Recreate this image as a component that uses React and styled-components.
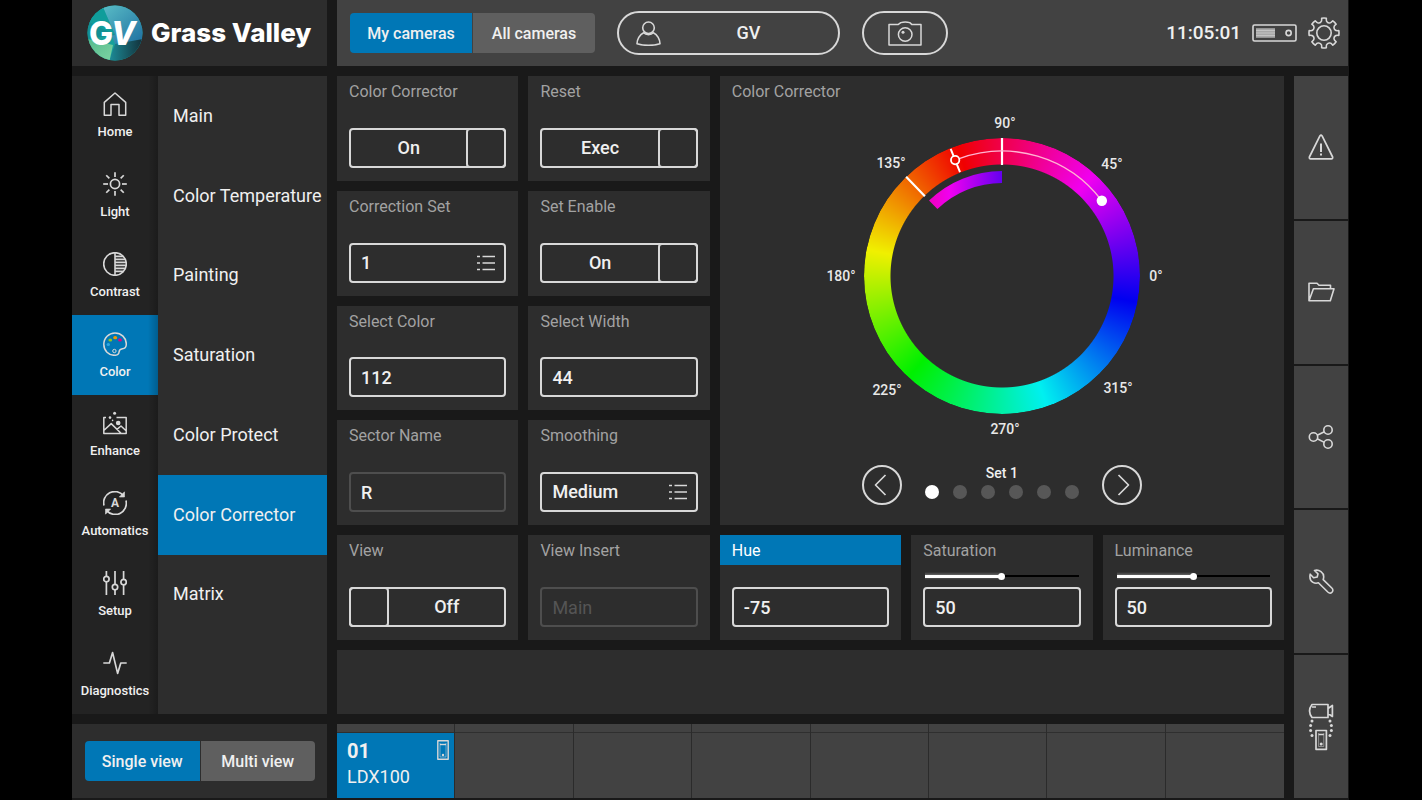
import React, { useState } from "react";
import styled, { createGlobalStyle, css } from "styled-components";

const GlobalStyle = createGlobalStyle`
  *, *::before, *::after { box-sizing: border-box; }
  body { margin: 0; background: #000; color: #f0f0f0; font: 400 18px/24px Roboto, "Liberation Sans", sans-serif; }
  button, input, select { font: inherit; color: inherit; margin: 0; }
  button { background: none; border: 0; padding: 0; cursor: pointer; }
  h2 { margin: 0; font: inherit; }
  svg { display: block; flex: none; }
`;

const blue = "#0077b6";
const panel = "#2d2d2d";
const raised = "#424242";
const line = "#d8d8d8";

/* ---------- page frame ---------- */

const Frame = styled.div`
  min-height: 100vh;
  margin: 0 73px 0 72px;
  padding: 0 1px 2px 0;
  background: #191919;
  display: grid;
  grid-template-columns: 255px minmax(0, 1fr) 54px;
  grid-template-rows: 66px minmax(0, 1fr) 74px;
  gap: 10px;
  grid-template-areas: "brand top top" "menu work rail" "view cams rail";
`;

const Brand = styled.div`
  grid-area: brand;
  background: ${panel};
  display: flex;
  align-items: center;
  gap: 8px;
  padding-left: 15px;
`;

const BrandName = styled.span`
  font: 800 26px/32px Inter, "Open Sans", sans-serif;
  color: #fff;
  white-space: nowrap;
`;

const TopBar = styled.header`
  grid-area: top;
  background: ${raised};
  display: flex;
  align-items: center;
  gap: 22px;
  padding: 0 8px 0 13px;
`;

const Status = styled.div`
  margin-left: auto;
  display: flex;
  align-items: center;
  gap: 11px;
`;

const Clock = styled.time`
  font-size: 19px;
  font-weight: 500;
`;

const Pill = styled.button`
  height: 44px;
  width: ${(p) => (p.$wide ? 223 : 86)}px;
  border: 2px solid ${line};
  border-radius: 22px;
  display: grid;
  grid-template-columns: ${(p) => (p.$wide ? "24px 1fr" : "auto")};
  place-items: center;
  padding: ${(p) => (p.$wide ? "0 1px 0 17px" : "0 17px")};
  font-weight: 500;
`;

/* ---------- segmented switch ---------- */

const Segments = styled.div`
  display: grid;
  grid-template-columns: 1fr 1fr;
  gap: 1px;
  width: ${(p) => p.$width};
  height: 40px;
  border-radius: 4px;
  overflow: hidden;
`;

const Segment = styled.button`
  background: ${(p) => (p.$on ? blue : "#5f5f5f")};
  padding-top: 1px;
  font-size: 16px;
  font-weight: 500;
`;

function Segmented({ options, label, width }) {
  const [active, setActive] = useState(0);
  return (
    <Segments role="group" aria-label={label} $width={width}>
      {options.map((o, i) => (
        <Segment key={o} $on={i === active} aria-pressed={i === active} onClick={() => setActive(i)}>
          {o}
        </Segment>
      ))}
    </Segments>
  );
}

/* ---------- left menus ---------- */

const Menus = styled.div`
  grid-area: menu;
  display: grid;
  grid-template-columns: 86px 1fr;
`;

const MainNav = styled.nav`
  display: grid;
  grid-template-rows: repeat(8, 1fr);
  background: #232323;
`;

const NavItem = styled.button`
  display: flex;
  flex-direction: column;
  align-items: center;
  justify-content: center;
  gap: 8px;
  padding-top: 1px;
  font-size: 13px;
  line-height: 16px;
  font-weight: 500;
  background: linear-gradient(to right, transparent 76px, rgba(0, 0, 0, 0.22)) ${(p) => (p.$on ? blue : "transparent")};
`;

const SubNav = styled.nav`
  display: grid;
  grid-template-rows: repeat(8, 1fr);
  background: ${panel};
`;

const SubItem = styled.button`
  text-align: left;
  padding-left: 15px;
  white-space: nowrap;
  background: ${(p) => (p.$on ? blue : "transparent")};
`;

const ViewBox = styled.div`
  grid-area: view;
  background: ${panel};
  display: flex;
  align-items: center;
  padding: 0 12px 0 13px;
`;

/* ---------- work area ---------- */

const Work = styled.main`
  grid-area: work;
  display: grid;
  grid-template-columns: repeat(5, minmax(0, 1fr));
  grid-template-rows: repeat(5, minmax(104px, 1fr)) 64px;
  gap: 10px;
`;

const Card = styled.section`
  background: ${panel};
  display: flex;
  flex-direction: column;
`;

const titleStyle = css`
  display: block;
  font-size: 16px;
  line-height: 28px;
  padding: 2px 12px 0;
  color: ${(p) => (p.$on ? "#fff" : "#a2a2a2")};
  background: ${(p) => (p.$on ? blue : "transparent")};
`;
const Title = styled.label`${titleStyle}`;
const Heading = styled.h2`${titleStyle}`;

const Slot = styled.div`
  flex: 1;
  display: flex;
  align-items: center;
  padding: 0 14px;
`;

const box = css`
  width: 100%;
  height: 40px;
  border: 2px solid ${line};
  border-radius: 4px;
  background: transparent;
  font-weight: 500;
`;

const Field = styled.div`
  position: relative;
  margin: 0 12px 13px;
  display: grid;
`;

const TextInput = styled.input`
  ${box}
  padding: 0 10px;
  outline: none;
  &:disabled { border-color: #4e4e4e; }
  &::placeholder { color: #555; font-weight: 400; opacity: 1; }
`;

const Choice = styled.select`
  ${box}
  padding: 0 10px;
  appearance: none;
  outline: none;
`;

const ListMark = styled.span`
  position: absolute;
  right: 11px;
  top: 12px;
  pointer-events: none;
`;

const Toggle = styled.button`
  ${box}
  display: flex;
  flex-direction: ${(p) => (p.$left ? "row-reverse" : "row")};
`;

const ToggleText = styled.span`
  flex: 1;
  align-self: center;
`;

const Knob = styled.span`
  width: 40px;
  margin: ${(p) => (p.$left ? "-2px 0 -2px -2px" : "-2px -2px -2px 0")};
  align-self: stretch;
  border: 2px solid ${line};
  border-radius: 4px;
`;

const Range = styled.input`
  appearance: none;
  width: 100%;
  height: 8px;
  outline: none;
  background:
    linear-gradient(#fff, #fff) left center / 50% 3px no-repeat,
    linear-gradient(transparent, rgba(255, 255, 255, 0.35), transparent) left center / 50% 8px no-repeat,
    linear-gradient(#000, #000) left center / 100% 2px no-repeat;
  &::-webkit-slider-thumb {
    appearance: none;
    width: 7px;
    height: 7px;
    border-radius: 50%;
    background: #fff;
  }
`;

const Message = styled.div`
  grid-column: 1 / -1;
  background: ${panel};
`;

/* ---------- colour wheel ---------- */

const WheelCard = styled(Card)`
  grid-column: 3 / 6;
  grid-row: 1 / 5;
`;

const Wheel = styled.div`
  display: grid;
  place-items: center;
  margin-top: 5px;
  & > * { grid-area: 1 / 1; }
  & > svg { z-index: 1; }
`;

const Ring = styled.div`
  width: 276px;
  height: 276px;
  border-radius: 50%;
  background: conic-gradient(from -19deg, #f00000 0deg, #f000f0 61deg, #0000f0 120deg, #00f0f0 180deg, #00f000 242deg, #f0f000 300deg, #f00000 360deg);
  mask: radial-gradient(circle, transparent 111px, #000 112px);
`;

const Mark = styled.text`
  fill: #e8e8e8;
  font-size: 14px;
  font-weight: 500;
  text-anchor: middle;
  dominant-baseline: central;
`;

const Pager = styled.div`
  display: flex;
  justify-content: center;
  align-items: flex-end;
  gap: 23px;
  margin-top: 22px;
`;

const Arrow = styled.button`
  width: 40px;
  height: 40px;
  border: 2px solid ${line};
  border-radius: 50%;
  display: grid;
  place-items: center;
`;

const PageInfo = styled.div`
  display: grid;
  justify-items: center;
  gap: 2px;
  padding-bottom: 6px;
  font-size: 14px;
  font-weight: 500;
  line-height: 20px;
`;

const Dots = styled.div`
  display: flex;
  gap: 14px;
`;

const Dot = styled.button`
  width: 14px;
  height: 14px;
  border-radius: 50%;
  background: ${(p) => (p.$on ? "#fff" : "#575757")};
`;

/* ---------- camera strip and right rail ---------- */

const Cameras = styled.div`
  grid-area: cams;
  display: grid;
  grid-template-columns: repeat(8, minmax(0, 1fr));
  background: ${raised};
`;

const CameraCell = styled.button`
  display: grid;
  grid-template-rows: 9px 1fr;
  text-align: left;
  border-right: 1px solid #2b2b2b;
  &:last-child { border-right: 0; }
`;

const Tally = styled.span`
  border-bottom: 1px solid #2f2f2f;
`;

const CameraBody = styled.span`
  display: flex;
  justify-content: space-between;
  padding: 5px 5px 0 10px;
  background: ${(p) => (p.$on ? blue : "transparent")};
  & > svg { margin-top: 2px; }
`;

const CameraName = styled.span`
  display: grid;
  align-content: start;
  line-height: 26px;
`;

const CameraNumber = styled.strong`
  font-size: 20px;
  font-weight: 700;
`;

const Rail = styled.aside`
  grid-area: rail;
  display: grid;
  grid-template-rows: repeat(5, 1fr);
  gap: 2px;
`;

const RailButton = styled.button`
  background: ${raised};
  display: grid;
  place-items: center;
`;

/* ---------- icons ---------- */

function Icon({ w = 24, h = 24, sw = 1.5, children }) {
  return (
    <svg width={w} height={h} viewBox={`0 0 ${w} ${h}`} fill="none" stroke={line} strokeWidth={sw} strokeLinejoin="round" aria-hidden="true">
      {children}
    </svg>
  );
}

const rays = [0, 45, 90, 135, 180, 225, 270, 315];

const HomeIcon = () => <Icon><path d="M1.3 23.2V10.4L12 1 22.7 10.4V23.2H16V12.5H8V23.2Z" /></Icon>;
const LightIcon = () => (
  <Icon sw={1.7}>
    <circle cx="12" cy="12" r="4.6" />
    {rays.map((a) => <path key={a} d={a % 90 ? "M12 -.4V4" : "M12 .2V5"} transform={`rotate(${a} 12 12)`} />)}
  </Icon>
);
const ContrastIcon = () => (
  <Icon sw={1.6}>
    <circle cx="12" cy="12" r="11.3" />
    <path d="M12 .6V23.4M12 4.4H20M12 7.4H22M12 10.4H23M12 13.4H23M12 16.4H22M12 19.4H20.4" />
  </Icon>
);
const ColorIcon = () => (
  <Icon>
    <path d="M12 .9C5.8.9.8 5.9.8 12.3S5.6 23.3 11.5 23.3C15 23.3 15.8 22.3 16 20.2 16.2 17.5 17.5 17 19.5 16.8 22.4 16.5 23.3 14.5 23.3 12 23.3 5.8 18.2.9 12 .9Z" />
    <g stroke="none">
      <ellipse cx="7.3" cy="8" rx="1.9" ry="1.6" fill="#8fc31f" />
      <ellipse cx="12.2" cy="5.7" rx="2" ry="1.6" fill="#f39800" />
      <ellipse cx="17" cy="7.9" rx="1.9" ry="1.6" fill="#e4007f" />
      <ellipse cx="5.3" cy="12.6" rx="1.7" ry="1.5" fill="#2ea7e0" />
    </g>
    <circle cx="11.4" cy="19" r="1.7" strokeWidth="1" />
  </Icon>
);
const EnhanceIcon = () => (
  <Icon>
    <path d="M13.5 6.5H23.2V22.5H.8V6.5H3M.8 19.5 8.2 12.6 18 22.3M14 18.3 18 15 23.3 20" />
    <circle cx="15.2" cy="12" r="1.6" fill={line} />
    <g fill={line} stroke="none"><circle cx="11.6" cy="2.2" r="1.5" /><circle cx="7" cy="6.6" r="1.3" /><circle cx="9.6" cy="9.4" r=".8" /></g>
  </Icon>
);
const AutoIcon = () => (
  <Icon sw={1.7}>
    <path d="M1 14.5A11.2 11.2 0 0 1 20.3 4.4M23 9.5A11.2 11.2 0 0 1 3.7 19.6" />
    <path d="M21.5.8V6H16.3ZM2.5 23.2V18H7.7Z" fill={line} strokeWidth=".6" />
    <text x="12" y="16.2" textAnchor="middle" fill={line} stroke="none" fontSize="12" fontWeight="700">A</text>
  </Icon>
);
const SetupIcon = () => (
  <Icon sw={1.7}>
    <path d="M3.4 0V5.4M3.4 10.8V24M12 0V13.4M12 18.8V24M20.6 0V8.4M20.6 13.8V24" />
    <circle cx="3.4" cy="8.1" r="2.7" /><circle cx="12" cy="16.1" r="2.7" /><circle cx="20.6" cy="11.1" r="2.7" />
  </Icon>
);
const DiagIcon = () => <Icon sw={1.7}><path d="M.3 12H6.4L9.6 1.6 14.6 22.4 17.8 12H23.7" /></Icon>;

const UserIcon = () => (
  <Icon w={25} h={25} sw={1.6}>
    <circle cx="12.5" cy="6.8" r="5.8" />
    <path d="M7.6 11.8C3.6 13.6 1 18.4 1 22.8 8 24.7 17 24.7 24 22.8 24 18.4 21.4 13.6 17.4 11.8 15 14.2 10 14.2 7.6 11.8Z" />
  </Icon>
);
const PhotoIcon = () => (
  <Icon w={34} h={25} sw={1.5}>
    <path d="M1 3.6H10L12.8 1.6C15.5.8 19 .8 21.8 1.6L24 3.6H33V24H1Z" />
    <circle cx="17.2" cy="13.5" r="6.8" />
    <circle cx="15" cy="11.2" r="1.5" fill={line} stroke="none" />
  </Icon>
);
const ServerIcon = () => (
  <Icon w={45} h={18} sw={1.6}>
    <rect x="1" y="1" width="43" height="16" rx="1.5" />
    <path d="M4 4.2H23V13.8H4Z" fill="#a8a8a8" stroke="none" />
    <path d="M4 6.5H23M4 9H23M4 11.5H23" stroke="#c4c4c4" strokeWidth="1" />
    <circle cx="36.6" cy="9" r="2.6" />
  </Icon>
);

const gearPath = rays
  .map((a) => {
    const at = (deg, r) => {
      const t = ((a + deg) * Math.PI) / 180;
      return `${(16 + r * Math.sin(t)).toFixed(2)} ${(16 - r * Math.cos(t)).toFixed(2)}`;
    };
    return `${a === 0 ? "M" : "L"}${at(-15, 11.6)}Q${at(-10, 12)} ${at(-9, 15)}A15 15 0 0 1 ${at(9, 15)}Q${at(10, 12)} ${at(15, 11.6)}Q${at(22.5, 10.6)} ${at(30, 11.6)}`;
  })
  .join("");
const GearIcon = () => (
  <Icon w={32} h={32} sw={1.6}>
    <path d={`${gearPath}Z`} />
    <circle cx="16" cy="16" r="7.2" />
  </Icon>
);

const AlertIcon = () => (
  <Icon w={26} h={26} sw={1.7}>
    <path d="M11.9 1.9Q13 .3 14.1 1.9L24.6 23Q25 24.8 23.4 24.9H2.6Q1 24.8 1.4 23Z" />
    <path d="M13 9.5V18M13 19.5V21.5" strokeWidth="2" />
  </Icon>
);
const FolderIcon = () => (
  <Icon w={27} h={20} sw={1.6}>
    <path d="M1 18.8V1.2H9L11 3.2H22.5V6.8M1 18.8 5.4 6.8H26L22.3 18.8Z" />
  </Icon>
);
const ShareIcon = () => (
  <Icon sw={1.6} w={26}>
    <circle cx="5.5" cy="12" r="4.2" /><circle cx="20" cy="5" r="4.2" /><circle cx="20" cy="19" r="4.2" />
    <path d="M9.2 10.3 16.4 6.8M9.2 13.8 16.4 17.4" />
  </Icon>
);
const WrenchIcon = () => (
  <Icon w={25} h={25} sw={1.6}>
    <path d="M5.5 1.5 9 4.8 8.2 8 4.6 8.8 1.2 5.2C.4 9 1.5 12 4 13.4 6 14.5 8 14.3 9.4 13.8L18.8 23C20.2 24.3 22 24.2 23 23.2 24.2 22 24.2 20.4 22.8 19L14.2 10.6C15.2 7.5 14.5 4.5 12 2.7 10 1.2 7.5.8 5.5 1.5Z" />
  </Icon>
);
const LinkIcon = () => (
  <Icon w={26} h={48} sw={1.7}>
    <path d="M4 1.5H20V14.5H4C.6 10 .6 6 4 1.5ZM4 4H8M20 5.5 24.4 2.5V13.5L20 10.5" />
    <path d="M8 27.5H18.4V46.3H8ZM10.6 31.5H15.8" />
    <path d="M10.6 30V43.5H15.8V30" strokeWidth=".5" />
    <g fill={line} stroke="none">
      {[[4, 18], [2.6, 22.6], [2.6, 27.6], [4, 32.6]].map(([x, y]) => (
        <React.Fragment key={y}><circle cx={x} cy={y} r="1.5" /><circle cx={26 - x} cy={y} r="1.5" /></React.Fragment>
      ))}
      <circle cx="13.2" cy="41" r="1.5" />
    </g>
  </Icon>
);
const UnitIcon = () => (
  <Icon w={12} h={20} sw={1.4}>
    <path d="M.8.8H11.2V19.2H.8Z" />
    <path d="M3 4.5H9" />
    <path d="M3 3V17H9V3" strokeWidth=".5" />
    <circle cx="6" cy="15" r="1.2" fill={line} stroke="none" />
  </Icon>
);
const ListIcon = () => (
  <Icon w={18} h={16} sw={1.6}>
    <path d="M0 1.5H3M5.5 1.5H18M0 8H3M5.5 8H18M0 14.5H3M5.5 14.5H18" />
  </Icon>
);

const LogoLetter = styled.text`
  fill: #fff;
  font: ${(p) => (p.$slanted ? "italic" : "normal")} 800 32px Inter, sans-serif;
`;

const LogoMark = () => (
  <svg width="56" height="56" viewBox="0 0 56 56" role="img" aria-label="GV">
    <defs>
      <clipPath id="disc"><circle cx="28" cy="28" r="27.5" /></clipPath>
      <linearGradient id="sky" x1="0" y1="0" x2="1" y2="1"><stop offset="0" stopColor="#5cc0c8" /><stop offset="1" stopColor="#1e6fa0" /></linearGradient>
      <linearGradient id="deep" x1="0" y1="0" x2="1" y2="0"><stop offset="0" stopColor="#1d8c98" /><stop offset="1" stopColor="#12303a" /></linearGradient>
      <linearGradient id="leaf" x1="0" y1="0" x2="1" y2="1"><stop offset="0" stopColor="#55b98c" /><stop offset="1" stopColor="#7fd6a4" /></linearGradient>
    </defs>
    <g clipPath="url(#disc)">
      <path d="M0 0H56V56H0Z" fill="#17a09b" />
      <path d="M13 0H56V38L28 39Z" fill="url(#sky)" />
      <path d="M56 34 28 39 22 56H56Z" fill="url(#deep)" />
      <path d="M0 34 26 40 22 58H0Z" fill="url(#leaf)" />
      <path d="M0 0H15L28 30 0 34Z" fill="#128f93" />
      <path d="M15 0 28 30 0 16Z" fill="#0fb0a6" opacity=".45" />
    </g>
    <LogoLetter x="2" y="40">G</LogoLetter>
    <LogoLetter x="24" y="40" $slanted>V</LogoLetter>
  </svg>
);

/* ---------- data ---------- */

const navItems = [
  ["Home", HomeIcon], ["Light", LightIcon], ["Contrast", ContrastIcon], ["Color", ColorIcon],
  ["Enhance", EnhanceIcon], ["Automatics", AutoIcon], ["Setup", SetupIcon], ["Diagnostics", DiagIcon],
];
const subItems = ["Main", "Color Temperature", "Painting", "Saturation", "Color Protect", "Color Corrector", "Matrix"];
const railItems = [["Warnings", AlertIcon], ["Files", FolderIcon], ["Share", ShareIcon], ["Tools", WrenchIcon], ["Connection", LinkIcon]];
const marks = [
  ["90°", 3, -153], ["45°", 110, -112], ["0°", 154, 0], ["315°", 116, 112],
  ["270°", 3, 153], ["225°", -115, 114], ["180°", -161, 0], ["135°", -111, -113],
];

/* ---------- parts ---------- */

function ToggleCard({ id, title, text, left }) {
  return (
    <Card>
      <Title htmlFor={id}>{title}</Title>
      <Slot />
      <Field>
        <Toggle id={id} $left={left}>
          <ToggleText>{text}</ToggleText>
          <Knob $left={left} />
        </Toggle>
      </Field>
    </Card>
  );
}

function ChoiceCard({ id, title, options }) {
  return (
    <Card>
      <Title htmlFor={id}>{title}</Title>
      <Slot />
      <Field>
        <Choice id={id} defaultValue={options[0]}>
          {options.map((o) => <option key={o}>{o}</option>)}
        </Choice>
        <ListMark><ListIcon /></ListMark>
      </Field>
    </Card>
  );
}

function ValueCard({ id, title, value, placeholder, disabled, active, slider }) {
  return (
    <Card>
      <Title htmlFor={id} $on={active}>{title}</Title>
      <Slot>{slider && <Range type="range" aria-label={`${title} level`} min="0" max="100" defaultValue={value} />}</Slot>
      <Field>
        <TextInput id={id} type="text" defaultValue={value} placeholder={placeholder} disabled={disabled} />
      </Field>
    </Card>
  );
}

const polar = (deg, r) => {
  const t = (deg * Math.PI) / 180;
  return [r * Math.cos(t), -r * Math.sin(t)];
};
const spoke = (deg, a, b) => `M${polar(deg, a).join(" ")}L${polar(deg, b).join(" ")}`;
const arc = (from, to, r) => `M${polar(from, r).join(" ")}A${r} ${r} 0 0 1 ${polar(to, r).join(" ")}`;

function HueWheel({ center, width, hue }) {
  const [hx, hy] = polar(center, 125);
  const [tx, ty] = polar(center + hue, 125);
  const start = center + width / 2;
  const end = center - width / 2;
  return (
    <Wheel>
      <Ring />
      <svg width="360" height="330" viewBox="-180 -165 360 330" fill="none" stroke="#fff">
        <defs>
          <linearGradient id="shifted">
            <stop offset="0" stopColor="#f000c8" />
            <stop offset=".24" stopColor="#f000f0" />
            <stop offset="1" stopColor="#6400f0" />
          </linearGradient>
        </defs>
        <path d={arc(start, end, 99)} stroke="url(#shifted)" strokeWidth="12" />
        <path d={spoke(start, 111, 138) + spoke(end, 111, 138)} strokeWidth="2.2" />
        <path d={spoke(center, 112, 120.5) + spoke(center, 129.5, 137)} strokeWidth="2" />
        <path d={arc(center - 2, center + hue, 125)} stroke="#ffb4d2" strokeWidth="1.4" />
        <circle cx={hx} cy={hy} r="4.2" strokeWidth="1.8" />
        <circle cx={tx} cy={ty} r="5.2" fill="#fff" stroke="none" />
        <g stroke="none">
          {marks.map(([t, x, y]) => <Mark key={t} x={x} y={y}>{t}</Mark>)}
        </g>
      </svg>
    </Wheel>
  );
}

export default function App() {
  const [set, setSet] = useState(0);
  return (
    <>
      <GlobalStyle />
      <Frame>
        <Brand><LogoMark /><BrandName>Grass Valley</BrandName></Brand>

        <TopBar>
          <Segmented label="Camera filter" options={["My cameras", "All cameras"]} width="245px" />
          <Pill $wide><UserIcon />GV</Pill>
          <Pill aria-label="Snapshot"><PhotoIcon /></Pill>
          <Status>
            <Clock>11:05:01</Clock>
            <ServerIcon />
            <button aria-label="Settings"><GearIcon /></button>
          </Status>
        </TopBar>

        <Menus>
          <MainNav aria-label="Sections">
            {navItems.map(([name, Glyph]) => (
              <NavItem key={name} $on={name === "Color"}><Glyph />{name}</NavItem>
            ))}
          </MainNav>
          <SubNav aria-label="Color pages">
            {subItems.map((name) => (
              <SubItem key={name} $on={name === "Color Corrector"}>{name}</SubItem>
            ))}
          </SubNav>
        </Menus>

        <Work>
          <ToggleCard id="corrector" title="Color Corrector" text="On" />
          <ToggleCard id="reset" title="Reset" text="Exec" />
          <WheelCard>
            <Heading>Color Corrector</Heading>
            <HueWheel center={112} width={44} hue={-75} />
            <Pager>
              <Arrow aria-label="Previous set" onClick={() => setSet(Math.max(0, set - 1))}>
                <Icon sw={1.7}><path d="M15.5 2 5.5 12 15.5 22" /></Icon>
              </Arrow>
              <PageInfo>
                <span>Set {set + 1}</span>
                <Dots>
                  {[0, 1, 2, 3, 4, 5].map((i) => (
                    <Dot key={i} $on={i === set} aria-label={`Set ${i + 1}`} onClick={() => setSet(i)} />
                  ))}
                </Dots>
              </PageInfo>
              <Arrow aria-label="Next set" onClick={() => setSet(Math.min(5, set + 1))}>
                <Icon sw={1.7}><path d="M8.5 2 18.5 12 8.5 22" /></Icon>
              </Arrow>
            </Pager>
          </WheelCard>
          <ChoiceCard id="set" title="Correction Set" options={["1", "2", "3", "4", "5", "6"]} />
          <ToggleCard id="enable" title="Set Enable" text="On" />
          <ValueCard id="color" title="Select Color" value="112" />
          <ValueCard id="width" title="Select Width" value="44" />
          <ValueCard id="sector" title="Sector Name" value="R" disabled />
          <ChoiceCard id="smooth" title="Smoothing" options={["Medium", "Low", "High"]} />
          <ToggleCard id="view" title="View" text="Off" left />
          <ValueCard id="insert" title="View Insert" placeholder="Main" disabled />
          <ValueCard id="hue" title="Hue" value="-75" active />
          <ValueCard id="sat" title="Saturation" value="50" slider />
          <ValueCard id="lum" title="Luminance" value="50" slider />
          <Message role="status" />
        </Work>

        <ViewBox><Segmented label="View mode" options={["Single view", "Multi view"]} width="100%" /></ViewBox>

        <Cameras>
          {[0, 1, 2, 3, 4, 5, 6, 7].map((i) => (
            <CameraCell key={i} aria-label={i ? `Empty slot ${i + 1}` : undefined}>
              <Tally />
              <CameraBody $on={i === 0}>
                {i === 0 && (
                  <>
                    <CameraName><CameraNumber>01</CameraNumber>LDX100</CameraName>
                    <UnitIcon />
                  </>
                )}
              </CameraBody>
            </CameraCell>
          ))}
        </Cameras>

        <Rail>
          {railItems.map(([name, Glyph]) => (
            <RailButton key={name} aria-label={name}><Glyph /></RailButton>
          ))}
        </Rail>
      </Frame>
    </>
  );
}
